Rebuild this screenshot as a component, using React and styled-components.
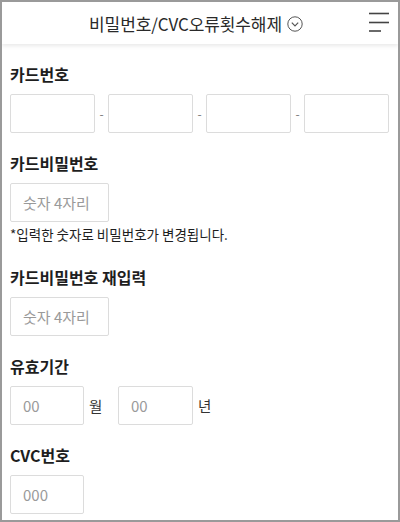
import React from 'react'
import styled, { createGlobalStyle } from 'styled-components'

const Global = createGlobalStyle`
  html, body {
    margin: 0;
    padding: 0;
    background: #fff;
  }
  * { box-sizing: border-box; }
`;

const Page = styled.div`
  width: 400px;
  height: 522px;
  border: 2px solid #9a9a9a;
  overflow: hidden;
  font-family: "Noto Sans CJK KR", "Noto Sans", sans-serif;
  color: #222;
  background: #fff;
`;

const Header = styled.header`
  position: relative;
  height: 42px;
  display: flex;
  align-items: center;
  justify-content: center;
  box-shadow: 0 2px 4px rgba(0, 0, 0, 0.09);
`;

const Title = styled.h1`
  margin: 1px 0 0 -8px;
  display: flex;
  align-items: center;
  gap: 5px;
  font-size: 17px;
  font-weight: 400;
  color: #2a2a2a;
  letter-spacing: -0.1px;
`;

const Menu = styled.button`
  position: absolute;
  right: 8px;
  top: 8px;
  width: 22px;
  height: 24px;
  padding: 0;
  border: 0;
  background: none;
`;

const Content = styled.main`
  padding: 18px 9px 0 8px;
`;

const Field = styled.section`
  margin-bottom: ${p => (p.$extra ? 23 : 18)}px;
`;

const Label = styled.h2`
  margin: 0 0 8px;
  font-size: 16px;
  line-height: 24px;
  font-weight: 700;
  color: #1e1e1e;
`;

const Row = styled.div`
  display: flex;
  align-items: center;
`;

const Box = styled.input`
  width: ${p => p.$w || 86}px;
  flex: ${p => (p.$grow ? 1 : 'none')};
  min-width: 0;
  height: 39px;
  padding: 0 12px;
  border: 1px solid #dcdcdc;
  border-radius: 2px;
  font-family: inherit;
  font-size: 15px;
  color: #333;
  outline: none;
  &::placeholder { color: #9a9a9a; }
`;

const Dash = styled.span`
  width: 13px;
  text-align: center;
  font-size: 12px;
  color: #777;
`;

const Unit = styled.span`
  width: ${p => p.$w}px;
  padding-left: 5px;
  font-size: 14.5px;
  color: #333;
`;

const Help = styled.p`
  margin: 4px 0 0;
  font-size: 13.5px;
  line-height: 16px;
  color: #1e1e1e;
`;

const Circle = () => (
  <svg width="16" height="16" viewBox="0 0 16 16" fill="none" stroke="#555" strokeWidth="1">
    <circle cx="8" cy="8" r="7.2" />
    <path d="M4.8 6.6 L8 9.8 L11.2 6.6" strokeWidth="1.2" />
  </svg>
);

const Burger = () => (
  <svg width="22" height="24" viewBox="0 0 22 24" stroke="#444" strokeWidth="1.6">
    <line x1="1" y1="3.5" x2="21" y2="3.5" />
    <line x1="1" y1="12.5" x2="21" y2="12.5" />
    <line x1="1" y1="21" x2="13" y2="21" />
  </svg>
);

export default function App() {
  return (
    <Page>
      <Global />
      <Header>
        <Title>비밀번호/CVC오류횟수해제 <Circle /></Title>
        <Menu aria-label="menu"><Burger /></Menu>
      </Header>
      <Content>
        <Field>
          <Label>카드번호</Label>
          <Row>
            <Box $grow />
            <Dash>-</Dash>
            <Box $grow />
            <Dash>-</Dash>
            <Box $grow />
            <Dash>-</Dash>
            <Box $grow />
          </Row>
        </Field>
        <Field $extra>
          <Label>카드비밀번호</Label>
          <Box $w={99} placeholder="숫자 4자리" />
          <Help>*입력한 숫자로 비밀번호가 변경됩니다.</Help>
        </Field>
        <Field>
          <Label>카드비밀번호 재입력</Label>
          <Box $w={99} placeholder="숫자 4자리" />
        </Field>
        <Field>
          <Label>유효기간</Label>
          <Row>
            <Box $w={74} placeholder="00" />
            <Unit $w={34}>월</Unit>
            <Box $w={75} placeholder="00" />
            <Unit $w={30}>년</Unit>
          </Row>
        </Field>
        <Field>
          <Label>CVC번호</Label>
          <Box $w={74} placeholder="000" />
          <Help>*카드 뒷면의 끝 세자리</Help>
        </Field>
      </Content>
    </Page>
  );
}
